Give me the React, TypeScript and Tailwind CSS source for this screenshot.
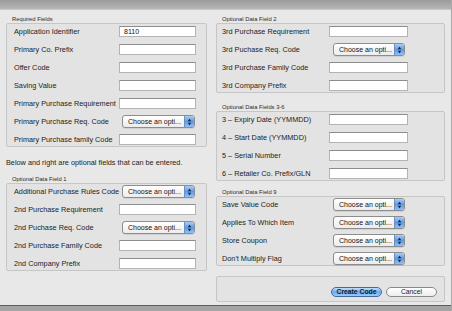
import React from "react";

type Field = { label: string; kind: "input" | "select"; value?: string };

function TextBox({ value, wide }: { value?: string; wide?: boolean }) {
  return (
    <div
      className={`h-[11px] ${wide ? "w-[79px]" : "w-[77px]"} bg-white border border-[#b4b4b4] border-t-[#8c8c8c] flex items-center pl-[4px] text-[7px] leading-none text-[#111]`}
    >
      {value}
    </div>
  );
}

function SelectBox({ wide }: { wide?: boolean }) {
  return (
    <div
      className={`${wide ? "ml-[4px] w-[72px]" : "ml-[3px] w-[73px]"} h-[13px] rounded-[3px] border border-[#8d8d8d] bg-gradient-to-b from-white to-[#ececec] flex items-center justify-between pl-[5px] shadow-[0_1px_0_rgba(0,0,0,0.08)]`}
    >
      <span className="text-[7px] leading-none text-[#111] whitespace-nowrap">Choose an opti...</span>
      {/* blue stepper */}
      <div className="h-[11px] w-[10px] rounded-r-[2px] bg-gradient-to-b from-[#a9cdf5] via-[#5e9ae6] to-[#8ec0f5] border-l border-[#6b8fc0] flex items-center justify-center">
        <svg width="5" height="8" viewBox="0 0 5 8">
          <path d="M2.5 0.8 L4.3 3.2 L0.7 3.2 Z" fill="#0f2440" />
          <path d="M2.5 7.2 L4.3 4.8 L0.7 4.8 Z" fill="#0f2440" />
        </svg>
      </div>
    </div>
  );
}

function Section({
  title,
  fields,
  right,
  className = "",
}: {
  title: string;
  fields: Field[];
  right?: boolean;
  className?: string;
}) {
  return (
    <div className={className}>
      <div className={`text-[5.8px] leading-[7px] h-[7px] text-[#2a2a2a] ${right ? "pl-[6px]" : "pl-[6px]"}`}>
        {title}
      </div>
      <div className="border border-[#c6c6c6] bg-[#e3e3e3] rounded-[2px] pt-[2px] pb-[1px] flex flex-col gap-[7px]">
        {fields.map((f) => (
          <div key={f.label} className="h-[11px] flex items-center">
            <div className={`w-[112px] ${right ? "pl-[5px]" : "pl-[7px]"} text-[7.3px] leading-none text-[#1c1c1c] whitespace-nowrap`}>
              {f.label}
            </div>
            {f.kind === "input" ? <TextBox value={f.value} wide={right} /> : <SelectBox wide={right} />}
          </div>
        ))}
      </div>
    </div>
  );
}

const required: Field[] = [
  { label: "Application Identifier", kind: "input", value: "8110" },
  { label: "Primary Co. Prefix", kind: "input" },
  { label: "Offer Code", kind: "input" },
  { label: "Saving Value", kind: "input" },
  { label: "Primary Purchase Requirement", kind: "input" },
  { label: "Primary Purchase Req. Code", kind: "select" },
  { label: "Primary Purchase family Code", kind: "input" },
];

const optional1: Field[] = [
  { label: "Additional Purchase Rules Code", kind: "select" },
  { label: "2nd Purchase Requirement", kind: "input" },
  { label: "2nd Puchase Req. Code", kind: "select" },
  { label: "2nd Purchase Family Code", kind: "input" },
  { label: "2nd Company Prefix", kind: "input" },
];

const optional2: Field[] = [
  { label: "3rd Purchase Requirement", kind: "input" },
  { label: "3rd Puchase Req. Code", kind: "select" },
  { label: "3rd Purchase Family Code", kind: "input" },
  { label: "3rd Company Prefix", kind: "input" },
];

const optional36: Field[] = [
  { label: "3 \u2013 Expiry Date (YYMMDD)", kind: "input" },
  { label: "4 \u2013 Start Date (YYMMDD)", kind: "input" },
  { label: "5 \u2013 Serial Number", kind: "input" },
  { label: "6 \u2013 Retailer Co. Prefix/GLN", kind: "input" },
];

const optional9: Field[] = [
  { label: "Save Value Code", kind: "select" },
  { label: "Applies To Which Item", kind: "select" },
  { label: "Store Coupon", kind: "select" },
  { label: "Don't Multiply Flag", kind: "select" },
];

export default function App() {
  return (
    <div className="w-[452px] h-[311px] overflow-hidden bg-[#e8e8e8] border-r border-[#a9a9a9] font-['Liberation_Sans',Arial,sans-serif]">
      {/* Title bar */}
      <div className="h-[10px] bg-gradient-to-b from-[#9b9b9b] to-[#b6b6b6] border-b border-[#c9c9c9]" />

      <div className="h-[295px] flex pl-[6px] gap-[9px] pt-[6px]">
        {/* Left column */}
        <div className="w-[201px] flex flex-col">
          <Section title="Required Fields" fields={required} />
          <div className="mt-[11px] h-[10px] leading-[10px] text-[7.3px] text-[#1c1c1c] whitespace-nowrap">
            Below and right are optional fields that can be entered.
          </div>
          <Section title="Optional Data Field 1" fields={optional1} className="mt-[8px]" />
        </div>

        {/* Right column */}
        <div className="w-[229px] flex flex-col">
          <Section title="Optional Data Field 2" fields={optional2} right />
          <Section title="Optional Data Fields 3-6" fields={optional36} right className="mt-[11px]" />
          <Section title="Optional Data Field 9" fields={optional9} right className="mt-[8px]" />
          <div className="mt-[10px] h-[26px] border border-[#c6c6c6] bg-[#e3e3e3] rounded-[2px] flex items-end justify-end gap-[4px] pr-[7px] pb-[4px]">
            <button className="w-[51px] h-[10px] rounded-full border border-[#3f6aa3] bg-gradient-to-b from-[#c4e0fb] via-[#6ea9ea] to-[#9fcaf6] text-[6.8px] leading-none font-bold text-[#0c1b30]">
              Create Code
            </button>
            <button className="w-[51px] h-[10px] rounded-full border border-[#8a8a8a] bg-gradient-to-b from-white to-[#ededed] text-[6.8px] leading-none text-[#1a1a1a]">
              Cancel
            </button>
          </div>
        </div>
      </div>

      {/* bottom edge */}
      <div className="h-[6px] border-t border-[#5e5e5e] bg-[#a4a4a4]" />
    </div>
  );
}
